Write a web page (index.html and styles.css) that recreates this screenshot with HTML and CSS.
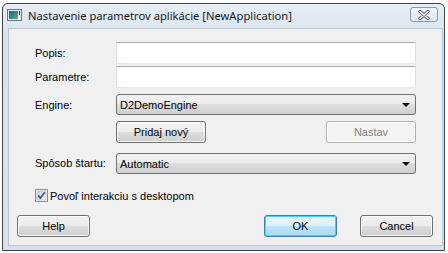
FILE: index.html
```html
<!DOCTYPE html>
<html lang="sk">
<head>
    <meta charset="UTF-8">
    <title>Nastavenie parametrov aplikácie</title>
    <link rel="stylesheet" href="styles.css">
</head>
<body>
    <div class="window">
        <div class="titlebar">
            <svg class="app-icon" width="15" height="12" viewBox="0 0 15 12">
                <defs>
                    <linearGradient id="scr" x1="0" y1="0" x2="1" y2="1">
                        <stop offset="0" stop-color="#1f5f94"/>
                        <stop offset="1" stop-color="#4fb08a"/>
                    </linearGradient>
                </defs>
                <rect x="0.5" y="0.5" width="14" height="11" fill="#e8ecf0" stroke="#6b7580"/>
                <rect x="2" y="2" width="9" height="8" fill="url(#scr)"/>
                <rect x="11" y="2" width="2" height="8" fill="#ffffff"/>
                <rect x="12" y="2" width="1" height="4" fill="#333333"/>
            </svg>
            <span class="title">Nastavenie parametrov aplikácie [NewApplication]</span>
            <div class="close">
                <svg width="14" height="10" viewBox="0 0 14 10">
                    <path d="M3 1.5 L11 8.5 M11 1.5 L3 8.5" stroke="#5a6470" stroke-width="3.4" stroke-linecap="round"/>
                    <path d="M3 1.5 L11 8.5 M11 1.5 L3 8.5" stroke="#ffffff" stroke-width="1.5" stroke-linecap="round"/>
                </svg>
            </div>
        </div>

        <div class="client">
            <div class="form">
                <div class="row">
                    <label class="caption">Popis:</label>
                    <div class="textbox"></div>
                </div>
                <div class="row row-tight">
                    <label class="caption">Parametre:</label>
                    <div class="textbox"></div>
                </div>
                <div class="row row-mid">
                    <label class="caption">Engine:</label>
                    <div class="combo">
                        <span>D2DemoEngine</span>
                        <span class="arrow"></span>
                    </div>
                </div>
                <div class="row row-mid">
                    <span class="caption"></span>
                    <div class="field-buttons">
                        <div class="btn btn-wide">Pridaj nový</div>
                        <div class="btn btn-wide btn-disabled">Nastav</div>
                    </div>
                </div>
                <div class="row row-wide">
                    <label class="caption caption-up">Spôsob štartu:</label>
                    <div class="combo">
                        <span>Automatic</span>
                        <span class="arrow"></span>
                    </div>
                </div>
            </div>

            <div class="check">
                <svg class="checkbox" width="13" height="13" viewBox="0 0 13 13">
                    <defs>
                        <linearGradient id="cb" x1="0" y1="0" x2="1" y2="1">
                            <stop offset="0" stop-color="#cbcfd5"/>
                            <stop offset="1" stop-color="#f6f6f6"/>
                        </linearGradient>
                    </defs>
                    <rect x="0.5" y="0.5" width="12" height="12" fill="#f4f4f4" stroke="#8e8f8f"/>
                    <rect x="2" y="2" width="9" height="9" fill="url(#cb)" stroke="#b4b9c0" stroke-width="0.6"/>
                    <path d="M3.2 6.4 L5.4 9 L9.8 3.2" fill="none" stroke="#3d5fa0" stroke-width="1.8"/>
                </svg>
                <span>Povoľ interakciu s desktopom</span>
            </div>

            <div class="footer">
                <div class="btn">Help</div>
                <div class="footer-right">
                    <div class="btn btn-default">OK</div>
                    <div class="btn">Cancel</div>
                </div>
            </div>
        </div>
    </div>
</body>
</html>
```

FILE: styles.css
```css
body {
    margin: 0;
    background: #ffffff;
    font-family: "Liberation Sans", Arial, sans-serif;
    font-size: 11px;
    color: #000000;
}
.window {
    margin: 3px 0 0 2px;
    width: 441px;
    height: 246px;
    border: 1px solid #3f4347;
    border-radius: 6px 6px 0 0;
    background: linear-gradient(#e6edf5, #dbe4ee 30px, #d9e2ec);
    display: flex;
    flex-direction: column;
}
.titlebar {
    height: 24px;
    display: flex;
    align-items: flex-start;
}
.app-icon {
    margin: 5px 0 0 4px;
}
.title {
    flex: 1;
    margin: 4px 0 0 6px;
    font-family: "Noto Sans", sans-serif;
    font-size: 11.2px;
    line-height: 15px;
    color: #1a1a1a;
}
.close {
    width: 26px;
    height: 13px;
    margin: 3px 6px 0 0;
    border: 1px solid #8e9aab;
    border-radius: 3px;
    background: linear-gradient(#f2f5f9, #dde5ee);
    display: flex;
    align-items: center;
    justify-content: center;
}
.client {
    margin: 0 1px 0 5px;
    border: 1px solid #b8c6d6;
    background: #f0f0f0;
    height: 216px;
    display: flex;
    flex-direction: column;
}
.form {
    padding: 13px 25px 0 26px;
}
.row {
    display: flex;
    align-items: center;
}
.row-tight {
    margin-top: 2px;
}
.row-mid {
    margin-top: 6px;
}
.row-wide {
    margin-top: 10px;
}
.caption {
    width: 81px;
    flex: none;
}
.caption-up {
    margin-top: -2px;
}
.textbox {
    width: 298px;
    height: 20px;
    background: #ffffff;
    border: 1px solid #e2e3ea;
    border-top-color: #abadb3;
    border-bottom-color: #e3e9ef;
}
.combo {
    width: 298px;
    height: 19px;
    border: 1px solid #707070;
    border-radius: 3px;
    background: linear-gradient(#f2f2f2, #ebebeb 50%, #dddddd 50%, #cfcfcf);
    display: flex;
    align-items: center;
    justify-content: space-between;
}
.combo span:first-child {
    padding-left: 3px;
}
.arrow {
    width: 0;
    height: 0;
    margin-right: 5px;
    border-left: 4px solid transparent;
    border-right: 4px solid transparent;
    border-top: 4px solid #000000;
}
.field-buttons {
    width: 300px;
    display: flex;
    justify-content: space-between;
}
.btn {
    width: 71px;
    height: 20px;
    border: 1px solid #707070;
    border-radius: 3px;
    background: linear-gradient(#f2f2f2, #ebebeb 50%, #dddddd 50%, #cfcfcf);
    box-shadow: inset 0 0 0 1px rgba(255, 255, 255, 0.8);
    display: flex;
    align-items: center;
    justify-content: center;
}
.btn-wide {
    width: 88px;
}
.btn-disabled {
    border-color: #adb2b5;
    background: #f4f4f4;
    color: #838383;
}
.btn-default {
    border-color: #3c7fb1;
    background: linear-gradient(#eaf6fd, #d9f0fc 50%, #bee6fd 50%, #a7d9f5);
    box-shadow: inset 0 0 0 1px #48d0fb;
}
.check {
    margin: 15px 0 0 26px;
    height: 13px;
    display: flex;
    align-items: center;
    gap: 2px;
}
.footer {
    margin-top: 13px;
    padding: 0 9px 0 8px;
    display: flex;
    justify-content: space-between;
}
.footer-right {
    display: flex;
    gap: 23px;
}
```
